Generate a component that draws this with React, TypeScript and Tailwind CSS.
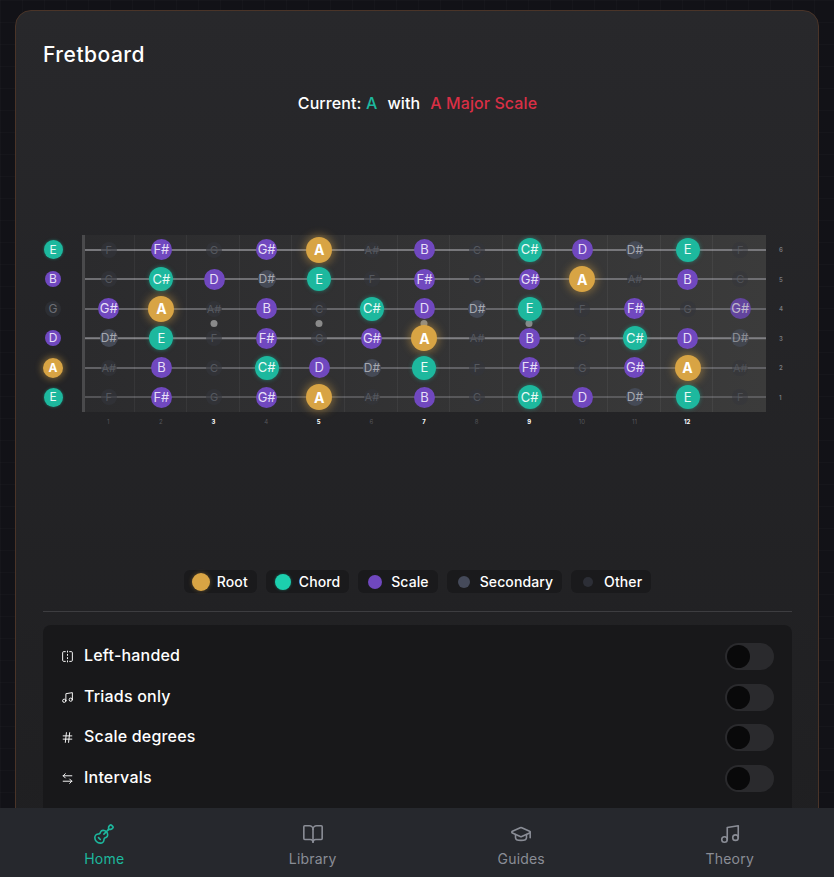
import { ArrowLeftRight, BookOpen, FlipHorizontal, GraduationCap, Guitar, Hash, Music } from "lucide-react";

const strings = [
  ["E", "F", "F#", "G", "G#", "A", "A#", "B", "C", "C#", "D", "D#", "E", "F"],
  ["B", "C", "C#", "D", "D#", "E", "F", "F#", "G", "G#", "A", "A#", "B", "C"],
  ["G", "G#", "A", "A#", "B", "C", "C#", "D", "D#", "E", "F", "F#", "G", "G#"],
  ["D", "D#", "E", "F", "F#", "G", "G#", "A", "A#", "B", "C", "C#", "D", "D#"],
  ["A", "A#", "B", "C", "C#", "D", "D#", "E", "F", "F#", "G", "G#", "A", "A#"],
  ["E", "F", "F#", "G", "G#", "A", "A#", "B", "C", "C#", "D", "D#", "E", "F"],
];

const kinds: Record<string, string> = {
  A: "root",
  "C#": "chord",
  E: "chord",
  B: "scale",
  D: "scale",
  "F#": "scale",
  "G#": "scale",
  "D#": "secondary",
};

const noteStyles: Record<string, string> = {
  root: "h-[26px] w-[26px] bg-[#d8a444] text-[14px] font-bold text-white shadow-[0_0_8px_2px_rgba(216,164,68,0.45)]",
  chord: "h-6 w-6 bg-[#1db89e] text-[13px] text-[#eafaf6] shadow-[0_0_4px_rgba(29,184,158,0.5)]",
  scale: "h-[21px] w-[21px] bg-[#7048bf] text-[13px] text-[#e6def7]",
  secondary: "h-[18px] w-[18px] bg-[#454a56] text-[12px] text-[#a5a8b0]",
  other: "h-4 w-4 bg-[#33363c]/60 text-[11px] text-[#55585f]",
};

const openStyles: Record<string, string> = {
  root: "h-[20px] w-[20px] bg-[#d8a444] text-[12px] font-bold text-white shadow-[0_0_6px_2px_rgba(216,164,68,0.4)]",
  chord: "h-[19px] w-[19px] bg-[#1db89e] text-[12px] text-[#eafaf6] shadow-[0_0_3px_rgba(29,184,158,0.5)]",
  scale: "h-4 w-4 bg-[#7048bf] text-[12px] text-[#e6def7]",
  other: "h-4 w-4 bg-[#2c2e33] text-[12px] text-[#6c6f76]",
};

const stringLines = [
  "h-[2px] bg-[#77777b]",
  "h-[2px] bg-[#6f6f73]",
  "h-[2px] bg-[#656569]",
  "h-[1.5px] bg-[#808084]",
  "h-[2px] bg-[#616165]",
  "h-px bg-[#7c7c80]",
];

const legend = [
  { label: "Root", swatch: "h-[18px] w-[18px] bg-[#d8a444] shadow-[0_0_4px_rgba(216,164,68,0.4)]" },
  { label: "Chord", swatch: "h-4 w-4 bg-[#1ccfae] shadow-[0_0_3px_rgba(28,207,174,0.4)]" },
  { label: "Scale", swatch: "h-3.5 w-3.5 bg-[#7048bf]" },
  { label: "Secondary", swatch: "h-3 w-3 bg-[#454a5a]" },
  { label: "Other", swatch: "h-2.5 w-2.5 bg-[#2c2e36]" },
];

const toggles = [
  { label: "Left-handed", icon: FlipHorizontal },
  { label: "Triads only", icon: Music },
  { label: "Scale degrees", icon: Hash },
  { label: "Intervals", icon: ArrowLeftRight },
];

const tabs = [
  { label: "Home", icon: Guitar, active: true },
  { label: "Library", icon: BookOpen },
  { label: "Guides", icon: GraduationCap },
  { label: "Theory", icon: Music },
];

const inlays = [3, 5, 7, 9];
const boldFrets = [3, 5, 7, 9, 12];

function Fretboard() {
  return (
    <div className="flex">
      {/* Open strings */}
      <div className="w-[39px] shrink-0">
        {strings.map((s, i) => (
          <div key={i} className="flex h-[29.5px] w-5 items-center justify-center">
            <span className={`flex shrink-0 items-center justify-center rounded-full ${openStyles[kinds[s[0]] ?? "other"]}`}>
              {s[0]}
            </span>
          </div>
        ))}
      </div>

      <div className="w-[684px] shrink-0">
        <div className="relative bg-gradient-to-r from-[#2b2b2d] to-[#3b3b3b]">
          {strings.map((s, i) => (
            <div key={i} className="relative grid h-[29.5px] grid-cols-13">
              <div className={`absolute inset-x-0 top-1/2 -translate-y-1/2 ${stringLines[i]}`} />
              {s.slice(1).map((note, f) => (
                <div
                  key={f}
                  className={`relative flex items-center justify-center pl-[1px] ${f < 12 ? "shadow-[inset_-1px_0_0_rgba(255,255,255,0.05)]" : "opacity-75"}`}
                >
                  {i === 2 && inlays.includes(f + 1) && (
                    <span className="absolute -bottom-[3.5px] left-1/2 h-[7px] w-[7px] -translate-x-1/2 rounded-full bg-[#8a8a8a]" />
                  )}
                  <span className={`relative flex shrink-0 items-center justify-center rounded-full ${noteStyles[kinds[note] ?? "other"]}`}>
                    {note}
                  </span>
                </div>
              ))}
            </div>
          ))}
          <div className="absolute inset-y-0 left-0 w-[3px] bg-[#4a4a4c]" />
        </div>
        <div className="mt-[5px] grid grid-cols-13">
          {Array.from({ length: 13 }, (_, f) => (
            <span
              key={f}
              className={`text-center text-[6px] leading-[10px] ${boldFrets.includes(f + 1) ? "font-bold text-white" : "text-[#55565a]"}`}
            >
              {f < 12 ? f + 1 : ""}
            </span>
          ))}
        </div>
      </div>

      <div className="flex-1 pl-[13px]">
        {[6, 5, 4, 3, 2, 1].map((n) => (
          <div key={n} className="flex h-[29.5px] items-center text-[6px] font-semibold text-[#7a7a7e]">
            {n}
          </div>
        ))}
      </div>
    </div>
  );
}

export default function App() {
  return (
    <div className="flex h-screen flex-col overflow-hidden bg-[#121217] bg-[linear-gradient(rgba(255,255,255,0.015)_1px,transparent_1px),linear-gradient(90deg,rgba(255,255,255,0.015)_1px,transparent_1px)] bg-[size:22px_22px] font-['Inter',sans-serif] text-white">
      <main className="min-h-0 flex-1 overflow-hidden px-[15px] pt-[10px]">
        <div className="rounded-t-2xl border border-[#4a3428] bg-gradient-to-b from-[#28282b] to-[#1f1f21] pt-[28px] pr-[26px] pl-[27px]">
          <h1 className="text-[21px] leading-8 font-medium tracking-[0.5px]">Fretboard</h1>

          <div className="mt-[20px] flex justify-center gap-[10px] text-[16px] leading-6 font-medium tracking-[0.1px]">
            <p>
              Current: <span className="text-[#1db89e]">A</span>
            </p>
            <p>with</p>
            <p className="text-[#d92f45]">A Major Scale</p>
          </div>

          <div className="mt-[120px]">
            <Fretboard />
          </div>

          <div className="mt-[143px] flex justify-center gap-[9px]">
            {legend.map((item) => (
              <div key={item.label} className="flex h-[23px] items-center gap-[6px] rounded-md bg-[#1a1a1c] pr-[9px] pl-[7px]">
                <span className="flex w-5 justify-center">
                  <span className={`block rounded-full ${item.swatch}`} />
                </span>
                <span className="text-sm font-medium tracking-[0.1px]">{item.label}</span>
              </div>
            ))}
          </div>

          <div className="mt-[18px] h-px bg-[#3d3d40]" />

          <div className="mt-[13px] rounded-t-lg bg-[#18181a] px-[18px] pt-[18px] pb-[60px]">
            <div className="flex flex-col gap-[13.7px]">
              {toggles.map((t) => (
                <div key={t.label} className="flex h-[27px] items-center">
                  <t.icon className="h-[13px] w-[13px]" strokeWidth={1.75} />
                  <span className="ml-[10px] flex-1 pb-[3px] text-[16px] font-medium tracking-[0.2px]">{t.label}</span>
                  <div className="flex h-[27px] w-[49px] items-center rounded-full bg-[#2a2a2d] pl-[2px]">
                    <span className="h-[23px] w-[23px] rounded-full bg-[#09090a]" />
                  </div>
                </div>
              ))}
            </div>
          </div>
        </div>
      </main>

      <nav className="grid h-[69px] shrink-0 grid-cols-4 bg-[#26282d]">
        {tabs.map((tab) => (
          <div
            key={tab.label}
            className={`flex flex-col items-center pt-[15px] ${tab.active ? "text-[#1db89e]" : "text-[#8a8d96]"}`}
          >
            <tab.icon className="h-[22px] w-[22px]" strokeWidth={1.75} />
            <span className="mt-[4px] text-sm leading-5 tracking-[0.2px]">{tab.label}</span>
          </div>
        ))}
      </nav>
    </div>
  );
}
